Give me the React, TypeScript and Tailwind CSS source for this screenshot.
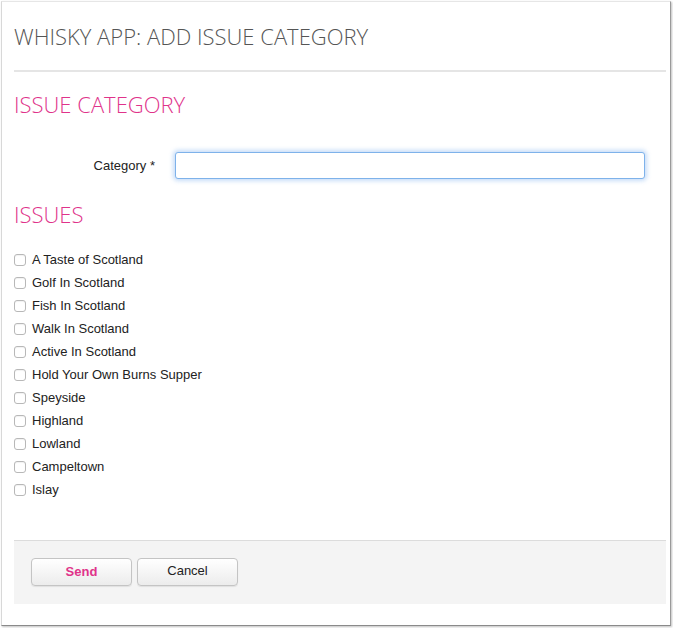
import React from "react";

const issues = [
  "A Taste of Scotland",
  "Golf In Scotland",
  "Fish In Scotland",
  "Walk In Scotland",
  "Active In Scotland",
  "Hold Your Own Burns Supper",
  "Speyside",
  "Highland",
  "Lowland",
  "Campeltown",
  "Islay",
];

export default function App() {
  return (
    <div className="w-[673px] h-[628px] bg-white overflow-hidden" style={{ fontFamily: '"Liberation Sans", Arial, sans-serif' }}>
      <div className="ml-[1px] mt-[1px] w-[670px] h-[625px] bg-white border-l border-t border-l-[#d8d8d8] border-t-[#e6e6e6] border-r border-b border-r-[#9a9a9a] border-b-[#8a8a8a] shadow-[1px_1px_2px_rgba(0,0,0,0.25)] pl-[12px] pr-[4px] flex flex-col">
        <h1 className="mt-[20px] h-[28px] leading-[28px] text-[22px] font-light text-[#555]" style={{ fontFamily: '"Open Sans", sans-serif' }}>
          WHISKY APP: ADD ISSUE CATEGORY
        </h1>
        <div className="mt-[20px] h-[2px] bg-[#e5e5e5]" />
        <h2 className="mt-[18px] h-[28px] leading-[28px] text-[22px] font-light text-[#e0338a]" style={{ fontFamily: '"Open Sans", sans-serif' }}>
          ISSUE CATEGORY
        </h2>
        <div className="mt-[34px] flex items-center">
          <label className="w-[141px] text-right text-[13px] text-[#222]">Category *</label>
          <input className="ml-[20px] w-[470px] h-[27px] rounded-[3px] border border-[#7eb2ea] bg-white shadow-[0_0_4px_2px_rgba(130,180,240,0.45)] outline-none" />
        </div>
        <h2 className="mt-[21px] h-[28px] leading-[28px] text-[22px] font-light text-[#e0338a]" style={{ fontFamily: '"Open Sans", sans-serif' }}>
          ISSUES
        </h2>
        <div className="mt-[20px] flex flex-col">
          {issues.map((t) => (
            <div key={t} className="h-[23px] flex items-center">
              <span className="w-[12px] h-[12px] rounded-[3px] border border-[#b8b8b8] bg-white shadow-[inset_0_1px_1px_rgba(0,0,0,0.06)]" />
              <span className="ml-[6px] text-[13px] text-[#222]">{t}</span>
            </div>
          ))}
        </div>
        <div className="mt-[39px] h-[64px] bg-[#f4f4f4] border-t border-[#dcdcdc] flex items-start pt-[17px] pl-[17px] gap-[5px]">
          <button className="w-[101px] h-[28px] rounded-[4px] border border-[#c4c4c4] bg-gradient-to-b from-white to-[#ececec] shadow-[0_1px_1px_rgba(0,0,0,0.08)] text-[13px] font-bold text-[#e0338a]">
            Send
          </button>
          <button className="w-[101px] h-[28px] rounded-[4px] border border-[#c4c4c4] bg-gradient-to-b from-white to-[#ececec] shadow-[0_1px_1px_rgba(0,0,0,0.08)] text-[13px] text-[#222] pb-[2px]">
            Cancel
          </button>
        </div>
      </div>
    </div>
  );
}
